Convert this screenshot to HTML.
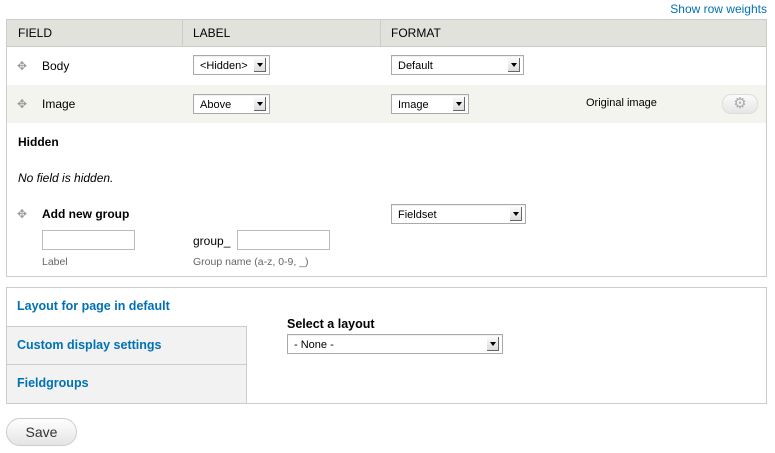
<!DOCTYPE html><html><head><style>
body{margin:0;width:775px;height:453px;background:#fff;font-family:"Liberation Sans",sans-serif;font-size:12px;color:#000;position:relative;overflow:hidden}
.a{position:absolute}
.sel{position:absolute;height:20px;border:1px solid #aaa;box-sizing:border-box;background:#fff;font-size:11px;line-height:20px;padding-left:6px;box-shadow:inset 0 1px 1px #eee}
.sel:after{content:"";position:absolute;right:3px;top:2px;width:11px;height:13px;background:linear-gradient(#fafafa,#ddd);border-right:1px solid #666;border-bottom:1px solid #666}
.sel:before{content:"";position:absolute;right:6px;top:7px;border:3px solid transparent;border-top:4px solid #000;z-index:1}
.drag{position:absolute;color:#999;font-size:12px}
.b{font-weight:bold}
.lnk{color:#0071b3;font-weight:bold;font-size:12.5px}
.inp{position:absolute;height:20px;border:1px solid #bbb;box-sizing:border-box}
</style></head><body>
<div class="a" style="right:8px;top:2px;color:#0071b3;font-size:12px">Show row weights</div>
<div class="a" style="left:6px;top:19px;width:761px;height:258px;border:1px solid #ccc;box-sizing:border-box"></div>
<div class="a" style="left:7px;top:20px;width:759px;height:26px;background:#e1e2dc;border-bottom:1px solid #ccc"></div>
<div class="a" style="left:182px;top:20px;width:1px;height:26px;background:#ccc"></div>
<div class="a" style="left:380px;top:20px;width:1px;height:26px;background:#ccc"></div>
<div class="a" style="left:18px;top:26px">FIELD</div>
<div class="a" style="left:193px;top:26px">LABEL</div>
<div class="a" style="left:391px;top:26px">FORMAT</div>
<div class="a" style="left:7px;top:85px;width:759px;height:38px;background:#f3f4ee"></div>
<div class="drag" style="left:17px;top:59px">✥</div>
<div class="a" style="left:42px;top:59px">Body</div>
<div class="sel" style="left:193px;top:55px;width:77px">&lt;Hidden&gt;</div>
<div class="sel" style="left:391px;top:55px;width:133px">Default</div>
<div class="drag" style="left:17px;top:97px">✥</div>
<div class="a" style="left:42px;top:97px">Image</div>
<div class="sel" style="left:193px;top:94px;width:77px">Above</div>
<div class="sel" style="left:391px;top:94px;width:78px">Image</div>
<div class="a" style="left:586px;top:97px;font-size:11px">Original image</div>
<div class="a" style="left:722px;top:94px;width:34px;height:18px;border:1px solid #ddd;border-radius:9px;background:linear-gradient(#fbfbfb,#e6e6e6);text-align:center;color:#aaa;font-size:15px;line-height:18px">⚙</div>
<div class="a b" style="left:18px;top:135px">Hidden</div>
<div class="a" style="left:18px;top:171px;font-style:italic">No field is hidden.</div>
<div class="drag" style="left:17px;top:207px">✥</div>
<div class="a b" style="left:42px;top:207px">Add new group</div>
<div class="sel" style="left:391px;top:204px;width:135px">Fieldset</div>
<div class="inp" style="left:42px;top:230px;width:93px"></div>
<div class="a" style="left:193px;top:234px">group_</div>
<div class="inp" style="left:237px;top:230px;width:93px"></div>
<div class="a" style="left:42px;top:256px;font-size:10.5px;color:#666">Label</div>
<div class="a" style="left:193px;top:256px;font-size:10.5px;color:#666">Group name (a-z, 0-9, _)</div>
<div class="a" style="left:6px;top:287px;width:761px;height:117px;border:1px solid #ccc;box-sizing:border-box"></div>
<div class="a" style="left:7px;top:326px;width:239px;height:77px;background:#f2f2f2;border-right:1px solid #ccc"></div>
<div class="a" style="left:7px;top:326px;width:240px;height:1px;background:#ccc"></div>
<div class="a" style="left:7px;top:364px;width:240px;height:1px;background:#ccc"></div>
<div class="a lnk" style="left:17px;top:299px">Layout for page in default</div>
<div class="a lnk" style="left:17px;top:338px">Custom display settings</div>
<div class="a lnk" style="left:17px;top:376px">Fieldgroups</div>
<div class="a b" style="left:287px;top:317px;font-size:12.5px">Select a layout</div>
<div class="sel" style="left:287px;top:334px;width:216px">- None -</div>
<div class="a" style="left:6px;top:418px;width:71px;height:28px;border:1px solid #ccc;box-sizing:border-box;border-radius:14px;background:linear-gradient(#fff,#e4e4e4);text-align:center;line-height:26px;font-size:14px;color:#333">Save</div>
</body></html>
